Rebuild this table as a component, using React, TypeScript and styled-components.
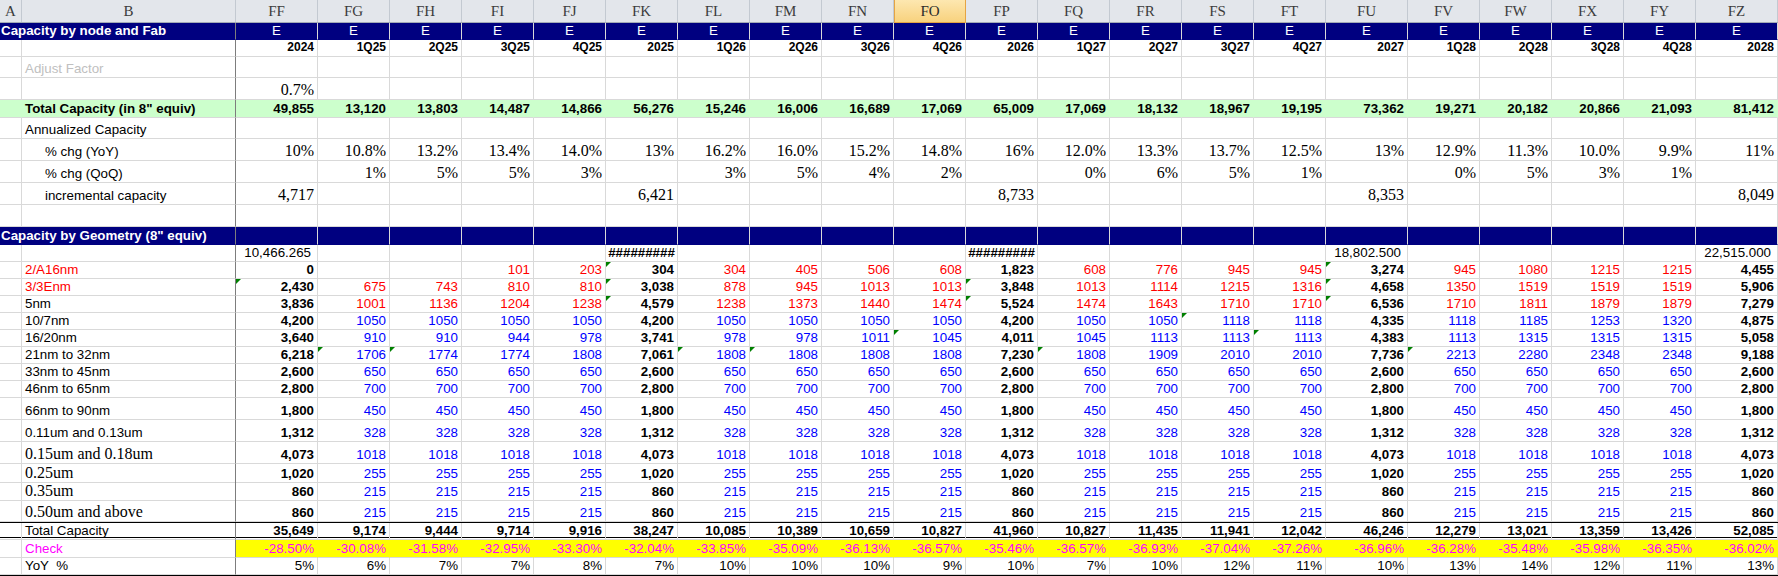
import React from "react";
import styled, { createGlobalStyle, css } from "styled-components";

const SANS = `"Liberation Sans", Arial, sans-serif`;
const SERIF = `"Liberation Serif", "Times New Roman", serif`;
const GRID = "#d9d9d9";
const PANE = "#7d7d7d";
const NAVY = "#000080";
const RED = "#ff0000";
const BLUE = "#0000ff";

const COLS = "22px 214px 82px repeat(14, 72px) 82px repeat(4, 72px) 82px";

const GlobalStyle = createGlobalStyle`
  html, body {
    margin: 0;
    padding: 0;
    background: #ffffff;
  }
  body {
    font-family: ${SANS};
    overflow: hidden;
  }
`;

const Sheet = styled.div`
  width: 1778px;
  display: flex;
  flex-direction: column;
`;

const HeadRow = styled.div`
  display: grid;
  grid-template-columns: ${COLS};
  height: 23px;
  box-sizing: border-box;
  background: #e3e6eb;
  border-bottom: 1px solid #a3abb6;
`;

const HeadCell = styled.div<{ $active?: boolean }>`
  display: flex;
  align-items: center;
  justify-content: center;
  box-sizing: border-box;
  font-family: ${SERIF};
  font-size: 15px;
  color: #3c3c3c;
  border-right: 1px solid #c3c9d1;
  ${(p) =>
    p.$active &&
    css`
      background: linear-gradient(#fde7b0, #f8d27e);
      border: 1px solid #e5a443;
      border-top: none;
      margin-bottom: -1px;
      color: #2a2a2a;
    `}
`;

type Edge = "pane" | "total" | "last";

const Row = styled.div<{ $h: number; $edge?: Edge }>`
  display: grid;
  grid-template-columns: ${COLS};
  height: ${(p) => p.$h}px;
  box-sizing: border-box;
  ${(p) =>
    p.$edge === "pane" &&
    css`
      & > * {
        border-bottom: 2px solid ${PANE};
      }
    `}
  ${(p) =>
    p.$edge === "total" &&
    css`
      border-top: 1px solid #000;
      border-bottom: 3px double #000;
      & > * {
        border-bottom: none;
      }
    `}
  ${(p) =>
    p.$edge === "last" &&
    css`
      border-bottom: 1px solid #000;
      & > * {
        border-bottom: none;
      }
    `}
`;

interface CellProps {
  $align?: "left" | "right" | "center";
  $color?: string;
  $bold?: boolean;
  $serif?: boolean;
  $size?: number;
  $padL?: number;
  $padR?: number;
  $fill?: string;
  $band?: boolean;
  $frozen?: boolean;
  $flag?: boolean;
}

const Cell = styled.div<CellProps>`
  position: relative;
  box-sizing: border-box;
  display: flex;
  align-items: flex-end;
  justify-content: ${(p) =>
    p.$align === "right" ? "flex-end" : p.$align === "center" ? "center" : "flex-start"};
  padding: 0 ${(p) => p.$padR ?? 3}px 1px ${(p) => p.$padL ?? 3}px;
  border-right: 1px solid ${(p) => (p.$frozen ? PANE : p.$fill ? p.$fill : GRID)};
  border-bottom: 1px solid ${(p) => (p.$band ? NAVY : GRID)};
  background: ${(p) => (p.$band ? NAVY : p.$fill ?? "transparent")};
  color: ${(p) => (p.$band ? "#ffffff" : p.$color ?? "#000000")};
  font-family: ${(p) => (p.$serif ? SERIF : SANS)};
  font-size: ${(p) => p.$size ?? (p.$serif ? 16 : 13.33)}px;
  font-weight: ${(p) => (p.$bold ? 700 : 400)};
  line-height: ${(p) => (p.$serif ? 17 : 15)}px;
  white-space: pre;
  ${(p) =>
    p.$flag &&
    css`
      &::before {
        content: "";
        position: absolute;
        top: 0;
        left: 0;
        border-top: 5px solid #008000;
        border-right: 5px solid transparent;
      }
    `}
`;

const Title = styled(Cell)`
  grid-column: span 2;
  padding-left: 1px;
  font-weight: 700;
`;

const HEADS = ["FF", "FG", "FH", "FI", "FJ", "FK", "FL", "FM", "FN", "FO", "FP", "FQ", "FR", "FS", "FT", "FU", "FV", "FW", "FX", "FY", "FZ"];
const PERIODS = ["2024", "1Q25", "2Q25", "3Q25", "4Q25", "2025", "1Q26", "2Q26", "3Q26", "4Q26", "2026", "1Q27", "2Q27", "3Q27", "4Q27", "2027", "1Q28", "2Q28", "3Q28", "4Q28", "2028"];

const isYear = (i: number) => i % 5 === 0;
const flat = (y: string, q: string) => HEADS.map((_, i) => (isYear(i) ? y : q));

const TOTAL_8 = ["49,855", "13,120", "13,803", "14,487", "14,866", "56,276", "15,246", "16,006", "16,689", "17,069", "65,009", "17,069", "18,132", "18,967", "19,195", "73,362", "19,271", "20,182", "20,866", "21,093", "81,412"];
const YOY = ["10%", "10.8%", "13.2%", "13.4%", "14.0%", "13%", "16.2%", "16.0%", "15.2%", "14.8%", "16%", "12.0%", "13.3%", "13.7%", "12.5%", "13%", "12.9%", "11.3%", "10.0%", "9.9%", "11%"];
const QOQ = ["", "1%", "5%", "5%", "3%", "", "3%", "5%", "4%", "2%", "", "0%", "6%", "5%", "1%", "", "0%", "5%", "3%", "1%", ""];
const INCR = ["4,717", "", "", "", "", "6,421", "", "", "", "", "8,733", "", "", "", "", "8,353", "", "", "", "", "8,049"];
const SCALE = ["10,466.265", "", "", "", "", "#########", "", "", "", "", "#########", "", "", "", "", "18,802.500", "", "", "", "", "22,515.000"];

interface GeoRow {
  label: string;
  h: number;
  vals: string[];
  tone: string;
  labelColor?: string;
  serif?: boolean;
  flags?: number[];
}

const GEO: GeoRow[] = [
  { label: "2/A16nm", h: 17, tone: RED, labelColor: RED, flags: [5, 15], vals: ["0", "", "", "101", "203", "304", "304", "405", "506", "608", "1,823", "608", "776", "945", "945", "3,274", "945", "1080", "1215", "1215", "4,455"] },
  { label: "3/3Enm", h: 17, tone: RED, labelColor: RED, flags: [0, 5, 10, 15], vals: ["2,430", "675", "743", "810", "810", "3,038", "878", "945", "1013", "1013", "3,848", "1013", "1114", "1215", "1316", "4,658", "1350", "1519", "1519", "1519", "5,906"] },
  { label: "5nm", h: 17, tone: RED, flags: [5, 10, 15], vals: ["3,836", "1001", "1136", "1204", "1238", "4,579", "1238", "1373", "1440", "1474", "5,524", "1474", "1643", "1710", "1710", "6,536", "1710", "1811", "1879", "1879", "7,279"] },
  { label: "10/7nm", h: 17, tone: BLUE, flags: [13], vals: ["4,200", "1050", "1050", "1050", "1050", "4,200", "1050", "1050", "1050", "1050", "4,200", "1050", "1050", "1118", "1118", "4,335", "1118", "1185", "1253", "1320", "4,875"] },
  { label: "16/20nm", h: 17, tone: BLUE, flags: [9, 14], vals: ["3,640", "910", "910", "944", "978", "3,741", "978", "978", "1011", "1045", "4,011", "1045", "1113", "1113", "1113", "4,383", "1113", "1315", "1315", "1315", "5,058"] },
  { label: "21nm to 32nm", h: 17, tone: BLUE, flags: [1, 2, 6, 7, 11, 16], vals: ["6,218", "1706", "1774", "1774", "1808", "7,061", "1808", "1808", "1808", "1808", "7,230", "1808", "1909", "2010", "2010", "7,736", "2213", "2280", "2348", "2348", "9,188"] },
  { label: "33nm to 45nm", h: 17, tone: BLUE, vals: flat("2,600", "650") },
  { label: "46nm to 65nm", h: 17, tone: BLUE, vals: flat("2,800", "700") },
  { label: "66nm to 90nm", h: 22, tone: BLUE, vals: flat("1,800", "450") },
  { label: "0.11um and 0.13um", h: 22, tone: BLUE, vals: flat("1,312", "328") },
  { label: "0.15um and 0.18um", h: 22, tone: BLUE, serif: true, vals: flat("4,073", "1018") },
  { label: "0.25um", h: 18, tone: BLUE, serif: true, vals: flat("1,020", "255") },
  { label: "0.35um", h: 18, tone: BLUE, serif: true, vals: flat("860", "215") },
  { label: "0.50um and above", h: 22, tone: BLUE, serif: true, vals: flat("860", "215") },
];

const TOTAL_GEO = ["35,649", "9,174", "9,444", "9,714", "9,916", "38,247", "10,085", "10,389", "10,659", "10,827", "41,960", "10,827", "11,435", "11,941", "12,042", "46,246", "12,279", "13,021", "13,359", "13,426", "52,085"];
const CHECK = ["-28.50%", "-30.08%", "-31.58%", "-32.95%", "-33.30%", "-32.04%", "-33.85%", "-35.09%", "-36.13%", "-36.57%", "-35.46%", "-36.57%", "-36.93%", "-37.04%", "-37.26%", "-36.96%", "-36.28%", "-35.48%", "-35.98%", "-36.35%", "-36.02%"];
const YOY_GEO = ["5%", "6%", "7%", "7%", "8%", "7%", "10%", "10%", "10%", "9%", "10%", "7%", "10%", "12%", "11%", "10%", "13%", "14%", "12%", "11%", "13%"];

const SerifRow = ({ h, label, vals }: { h: number; label: string; vals: string[] }) => (
  <Row $h={h}>
    <Cell />
    <Cell $frozen $padL={23}>
      {label}
    </Cell>
    {vals.map((v, i) => (
      <Cell key={HEADS[i]} $align="right" $serif>
        {v}
      </Cell>
    ))}
  </Row>
);

const App = () => {
  return (
    <>
      <GlobalStyle />
      <Sheet>
        <HeadRow>
          <HeadCell>A</HeadCell>
          <HeadCell>B</HeadCell>
          {HEADS.map((h) => (
            <HeadCell key={h} $active={h === "FO"}>
              {h}
            </HeadCell>
          ))}
        </HeadRow>

        <Row $h={17}>
          <Title $band $frozen>
            Capacity by node and Fab
          </Title>
          {HEADS.map((h) => (
            <Cell key={h} $band $align="center">
              E
            </Cell>
          ))}
        </Row>

        <Row $h={17} $edge="pane">
          <Cell />
          <Cell $frozen />
          {PERIODS.map((p) => (
            <Cell key={p} $align="right" $bold $size={12}>
              {p}
            </Cell>
          ))}
        </Row>

        <Row $h={21}>
          <Cell />
          <Cell $frozen $color="#c0c0c0">
            Adjust Factor
          </Cell>
          {HEADS.map((h) => (
            <Cell key={h} />
          ))}
        </Row>

        <SerifRow h={22} label="" vals={["0.7%", ...HEADS.slice(1).map(() => "")]} />

        <Row $h={18}>
          <Cell $fill="#ccffcc" />
          <Cell $fill="#ccffcc" $frozen $bold>
            Total Capacity (in 8" equiv)
          </Cell>
          {TOTAL_8.map((v, i) => (
            <Cell key={HEADS[i]} $fill="#ccffcc" $align="right" $bold>
              {v}
            </Cell>
          ))}
        </Row>

        <Row $h={21}>
          <Cell />
          <Cell $frozen>Annualized Capacity</Cell>
          {HEADS.map((h) => (
            <Cell key={h} />
          ))}
        </Row>

        <SerifRow h={22} label="% chg (YoY)" vals={YOY} />
        <SerifRow h={22} label="% chg (QoQ)" vals={QOQ} />
        <SerifRow h={22} label="incremental capacity" vals={INCR} />

        <Row $h={22}>
          <Cell />
          <Cell $frozen />
          {HEADS.map((h) => (
            <Cell key={h} />
          ))}
        </Row>

        <Row $h={18}>
          <Title $band $frozen>
            Capacity by Geometry (8" equiv)
          </Title>
          {HEADS.map((h) => (
            <Cell key={h} $band />
          ))}
        </Row>

        <Row $h={17}>
          <Cell />
          <Cell $frozen />
          {SCALE.map((v, i) =>
            v.startsWith("#") ? (
              <Cell key={HEADS[i]} $align="center" $bold $padL={0} $padR={0}>
                {v}
              </Cell>
            ) : (
              <Cell key={HEADS[i]} $align="right" $padR={6}>
                {v}
              </Cell>
            )
          )}
        </Row>

        {GEO.map((g) => (
          <Row key={g.label} $h={g.h}>
            <Cell />
            <Cell $frozen $serif={g.serif} $color={g.labelColor}>
              {g.label}
            </Cell>
            {g.vals.map((v, i) => (
              <Cell
                key={HEADS[i]}
                $align="right"
                $bold={isYear(i)}
                $color={isYear(i) ? "#000000" : g.tone}
                $flag={g.flags?.includes(i)}
              >
                {v}
              </Cell>
            ))}
          </Row>
        ))}

        <Row $h={18} $edge="total">
          <Cell />
          <Cell $frozen>Total Capacity</Cell>
          {TOTAL_GEO.map((v, i) => (
            <Cell key={HEADS[i]} $align="right" $bold>
              {v}
            </Cell>
          ))}
        </Row>

        <Row $h={18}>
          <Cell />
          <Cell $frozen $color="#ff00ff">
            Check
          </Cell>
          {CHECK.map((v, i) => (
            <Cell key={HEADS[i]} $align="right" $fill="#ffff00" $color="#ff00ff">
              {v}
            </Cell>
          ))}
        </Row>

        <Row $h={18} $edge="last">
          <Cell />
          <Cell $frozen>{"YoY  %"}</Cell>
          {YOY_GEO.map((v, i) => (
            <Cell key={HEADS[i]} $align="right">
              {v}
            </Cell>
          ))}
        </Row>
      </Sheet>
    </>
  );
};

export default App;
